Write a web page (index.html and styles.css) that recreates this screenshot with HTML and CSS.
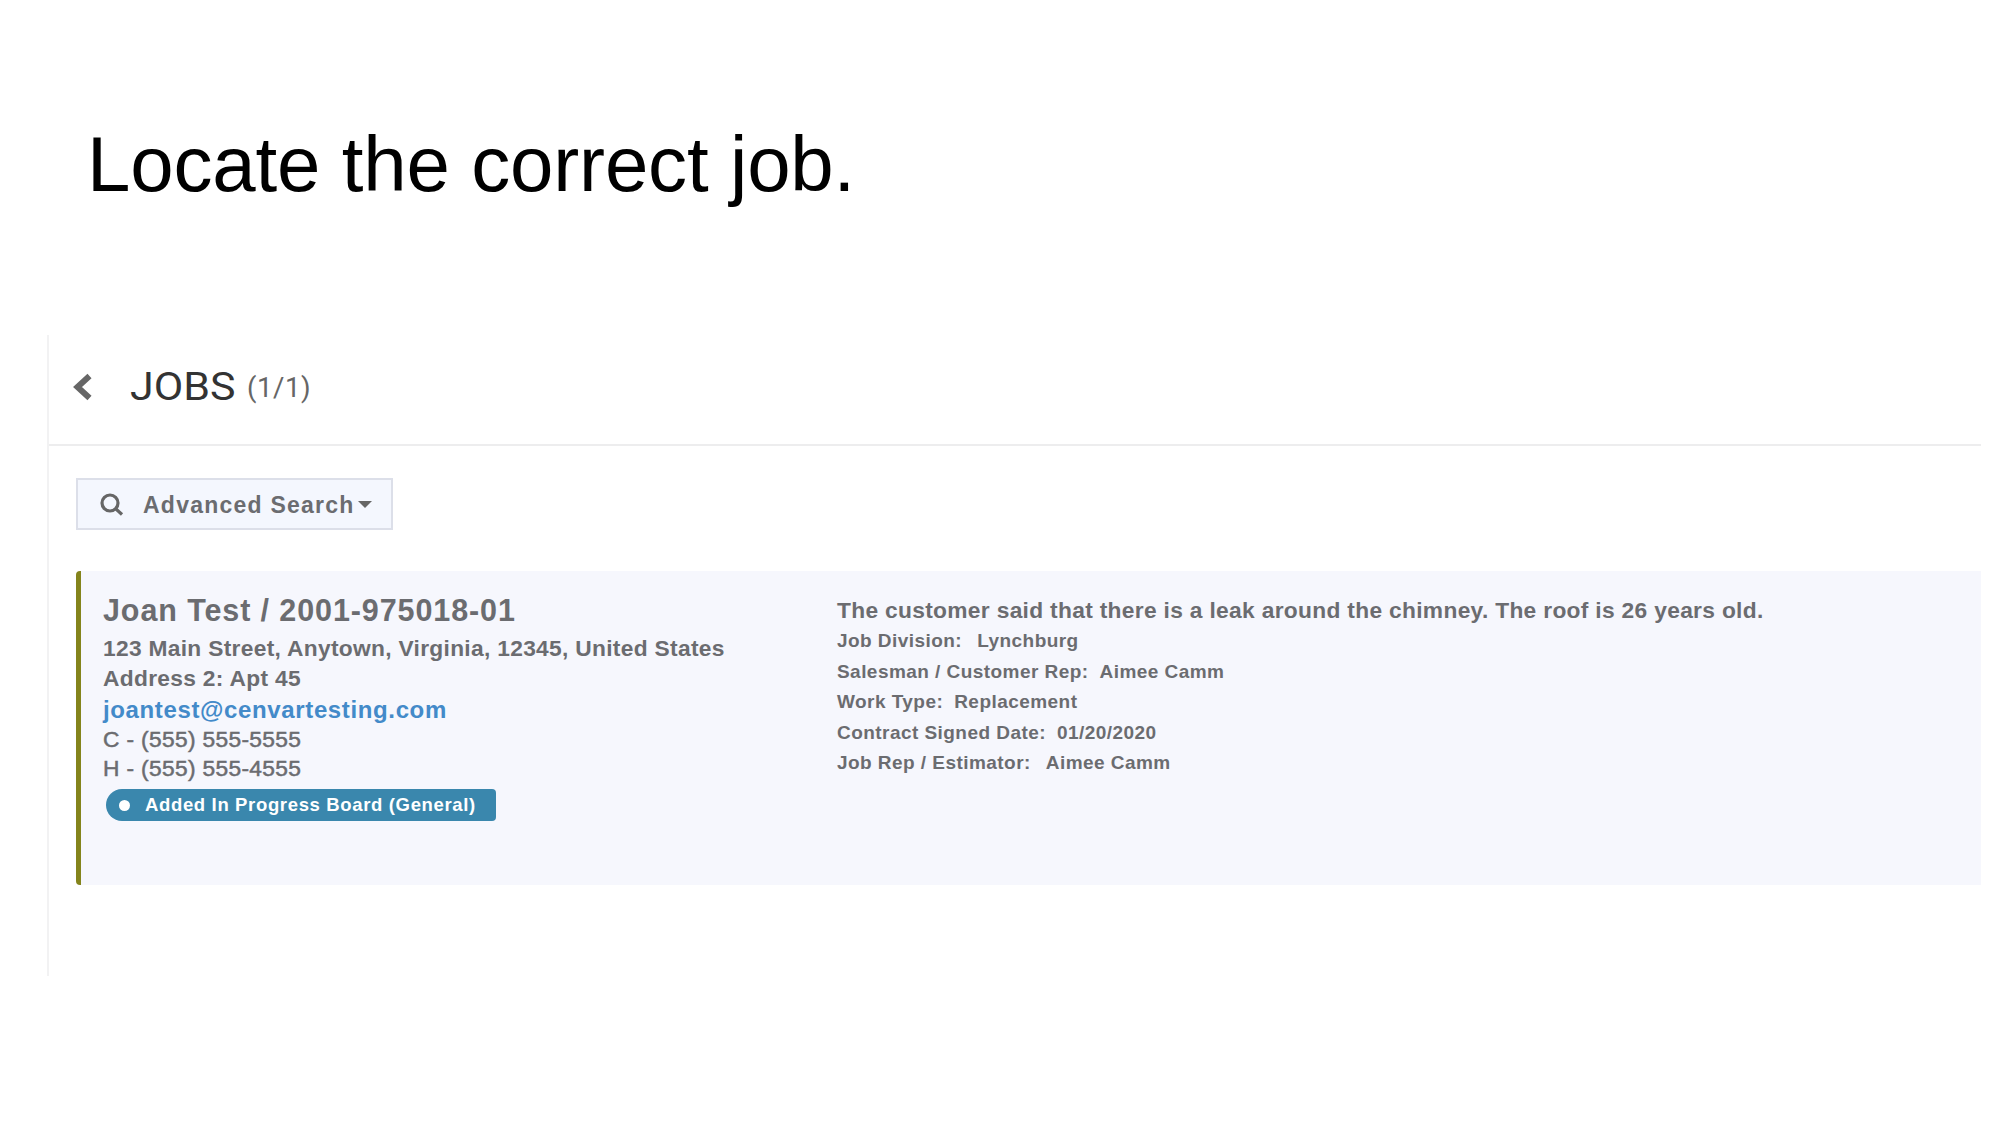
FILE: index.html
```
<!DOCTYPE html>
<html lang="en">
<head>
<meta charset="utf-8">
<title>Locate the correct job.</title>
<link rel="stylesheet" href="styles.css">
</head>
<body>
<main class="slide">
  <h1 class="slide-title">Locate the correct job.</h1>
  <section class="panel">
    <header class="panel-header">
      <svg class="back" viewBox="0 0 20 28"><path d="M17.500 3 5.500 14l12 11"/></svg>
      <h2 class="panel-title">JOBS</h2>
      <span class="count">(1/1)</span>
    </header>
    <button class="search" type="button">
      <svg class="search-icon" viewBox="0 0 24 24"><circle cx="10" cy="10" r="8"/><path d="m16 16 6 5.500"/></svg>
      <span class="search-label">Advanced Search</span>
      <span class="caret"></span>
    </button>
    <article class="job">
      <div class="contact">
        <div class="name">Joan Test / 2001-975018-01</div>
        <div class="address">123 Main Street, Anytown, Virginia, 12345, United States</div>
        <div class="address2">Address 2: Apt 45</div>
        <a class="email">joantest@cenvartesting.com</a>
        <div class="phone">C - (555) 555-5555</div>
        <div class="phone home">H - (555) 555-4555</div>
        <div class="badge"><span class="dot"></span>Added In Progress Board (General)</div>
      </div>
      <div class="details">
        <div class="description">The customer said that there is a leak around the chimney. The roof is 26 years old.</div>
        <div class="field wide-gap"><span>Job Division:</span><span>Lynchburg</span></div>
        <div class="field"><span>Salesman / Customer Rep:</span><span>Aimee Camm</span></div>
        <div class="field"><span>Work Type:</span><span>Replacement</span></div>
        <div class="field"><span>Contract Signed Date:</span><span>01/20/2020</span></div>
        <div class="field wide-gap"><span>Job Rep / Estimator:</span><span>Aimee Camm</span></div>
      </div>
    </article>
  </section>
</main>
</body>
</html>
```
FILE: styles.css
```
* { box-sizing: border-box; }
body { margin: 0; background: #fff; font-family: "Liberation Sans", Arial, sans-serif; color: #6b6c70; }
.slide { width: 2001px; height: 1125px; padding: 120px 20px 0 47px; overflow: hidden; }
.slide-title { margin: 0 0 126px 40px; height: 89px; line-height: 89px; font-size: 78px; font-weight: 400; letter-spacing: -0.16px; color: #000; white-space: nowrap; }
.panel { height: 641px; border-left: 2px solid #f2f2f3; }
.panel-header { display: flex; align-items: center; height: 111px; padding: 0 0 6px 23px; border-bottom: 2px solid #ededee; font-family: Roboto, sans-serif; }
.back { width: 20px; height: 28px; fill: none; stroke: #666; stroke-width: 6; }
.panel-title { margin: 1px 0 0 38px; width: 108px; font-size: 38px; font-weight: 400; color: #333; line-height: 44px; transform: scaleX(1.13); transform-origin: left; }
.count { margin: 2px 0 0 9px; font-size: 27.5px; letter-spacing: 0.6px; color: #666; }
.search { display: flex; align-items: center; width: 317px; height: 52px; margin: 32px 0 41px 27px; padding: 1px 0 0 22px; border: 2px solid #dcdfe9; background: #f4f7fe; font: bold 23px/30px "Liberation Sans", sans-serif; letter-spacing: 1.24px; color: #6b6c70; }
.search-icon { width: 24px; height: 24px; fill: none; stroke: #666; stroke-width: 3.2; }
.search-label { margin-left: 19px; white-space: nowrap; }
.caret { margin-left: 3px; border: 7px solid transparent; border-top-color: #666; border-bottom: 0; }
.job { display: grid; grid-template-columns: 734px 1fr; height: 314px; margin-left: 27px; padding: 22px 0 0 22px; border-left: 5px solid #84841c; border-radius: 4px 0 0 4px; background: #f6f7fd; font-weight: 700; font-size: 22.75px; white-space: nowrap; }
.name { font-size: 30.5px; line-height: 34px; letter-spacing: 0.9px; }
.address { margin-top: 6px; line-height: 31px; letter-spacing: 0.31px; }
.address2 { line-height: 28px; letter-spacing: 0.31px; }
.email { display: block; line-height: 35px; font-size: 24px; letter-spacing: 0.63px; color: #438ac9; }
.phone { line-height: 24px; font-weight: 400; letter-spacing: 0.34px; -webkit-text-stroke: 0.5px; }
.home { line-height: 34px; }
.badge { display: flex; align-items: center; width: 390px; height: 32px; margin: 4px 0 0 3px; padding-left: 13px; border-radius: 16px 4px 4px 16px; background: #3a87ad; color: #fff; font-size: 18.5px; letter-spacing: 0.65px; }
.dot { width: 11px; height: 11px; margin-right: 15px; border-radius: 50%; background: #fff; }
.description { padding-top: 1px; line-height: 32px; letter-spacing: 0.32px; }
.field { display: flex; gap: 11px; font-size: 19px; line-height: 30.6px; letter-spacing: 0.45px; }
.wide-gap { gap: 15px; }
```
